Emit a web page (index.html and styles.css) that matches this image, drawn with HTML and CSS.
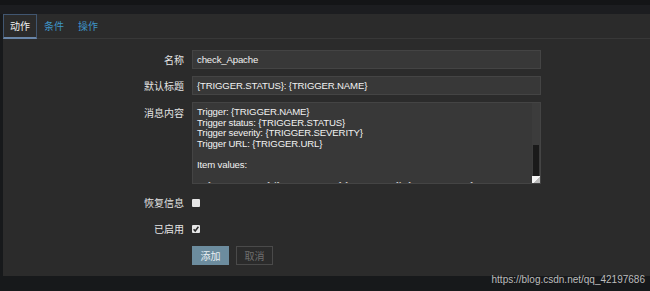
FILE: index.html
```html
<!DOCTYPE html>
<html lang="zh">
<head>
<meta charset="utf-8">
<title>动作</title>
<link rel="stylesheet" href="styles.css">
</head>
<body>
<div class="top"><div class="top-strip"></div></div>
<div class="panel">
  <div class="tabs">
    <div class="tab active">动作</div>
    <div class="tab">条件</div>
    <div class="tab">操作</div>
  </div>
  <div class="form">
    <div class="row r-input">
      <div class="label">名称</div>
      <div class="input">check_Apache</div>
    </div>
    <div class="row r-input">
      <div class="label">默认标题</div>
      <div class="input">{TRIGGER.STATUS}: {TRIGGER.NAME}</div>
    </div>
    <div class="row r-area">
      <div class="label">消息内容</div>
      <div class="textarea">
        <div class="area-text">Trigger: {TRIGGER.NAME}
Trigger status: {TRIGGER.STATUS}
Trigger severity: {TRIGGER.SEVERITY}
Trigger URL: {TRIGGER.URL}

Item values:

1. {ITEM.NAME1} ({HOST.NAME1}:{ITEM.KEY1}): {ITEM.VALUE1}</div>
        <div class="scroll"><div class="thumb"></div><div class="grip"></div></div>
      </div>
    </div>
    <div class="row r-check">
      <div class="label">恢复信息</div>
      <div><span class="cb"></span></div>
    </div>
    <div class="row r-check r-check2">
      <div class="label">已启用</div>
      <div><span class="cb"><svg width="8" height="8" viewBox="0 0 8 8"><path d="M1.6 4.2 L3.2 6 L6.4 1.8" fill="none" stroke="#2b2b2b" stroke-width="1.5"/></svg></span></div>
    </div>
    <div class="row r-btn">
      <div></div>
      <div class="buttons">
        <div class="btn primary">添加</div>
        <div class="btn secondary">取消</div>
      </div>
    </div>
  </div>
</div>
<div class="footer">https://blog.csdn.net/qq_42197686</div>
</body>
</html>
```
FILE: styles.css
```css
html, body {
  margin: 0;
  padding: 0;
}
body {
  width: 650px;
  height: 291px;
  overflow: hidden;
  background: #17191b;
  font-family: "Liberation Sans", Arial, "Noto Sans CJK SC", sans-serif;
  color: #e6e6e6;
}
.top {
  height: 14px;
  background: #1c1d20;
}
.top-strip {
  height: 5px;
  background: #141517;
}
.panel {
  margin-left: 3px;
  height: 262px;
  background: #2b2b2b;
  box-sizing: border-box;
}
.tabs {
  display: flex;
  height: 24px;
  border-bottom: 1px solid #383838;
}
.tab {
  padding: 0 7px;
  font-family: "Noto Sans CJK SC", sans-serif;
  font-size: 10px;
  line-height: 24px;
  color: #3f95c8;
}
.tab.active {
  color: #f0f0f0;
  box-sizing: border-box;
  border: 1px solid #415670;
  border-bottom: 2px solid #6a86a8;
  padding: 0 6px;
  line-height: 21px;
  height: 25px;
}
.form {
  display: flex;
  flex-direction: column;
  padding-top: 11px;
}
.row {
  display: grid;
  grid-template-columns: 181px 349px;
  column-gap: 8px;
  align-items: center;
}
.label {
  text-align: right;
  font-family: "Noto Sans CJK SC", sans-serif;
  font-size: 10px;
  color: #e4e4e4;
}
.r-input {
  height: 19px;
  margin-bottom: 7px;
}
.input {
  height: 19px;
  box-sizing: border-box;
  background: #383838;
  border: 1px solid #444;
  padding: 0 4px;
  font-size: 9.6px;
  letter-spacing: -0.15px;
  line-height: 17px;
  color: #f2f2f2;
  white-space: nowrap;
}
.r-area {
  align-items: start;
  height: 82px;
}
.r-area .label {
  padding-top: 3px;
}
.textarea {
  position: relative;
  height: 82px;
  box-sizing: border-box;
  background: #383838;
  border: 1px solid #444;
  overflow: hidden;
}
.area-text {
  white-space: pre;
  font-size: 9.6px;
  letter-spacing: -0.15px;
  line-height: 10.6px;
  padding: 4px 4px 0;
  color: #f2f2f2;
}
.scroll {
  position: absolute;
  right: 0;
  top: 0;
  bottom: 0;
  width: 8px;
  background: #3c3c3c;
}
.thumb {
  position: absolute;
  left: 1px;
  right: 1px;
  top: 42px;
  height: 33px;
  background: #1a1a1a;
}
.grip {
  position: absolute;
  left: 0;
  right: 0;
  bottom: 0;
  height: 7px;
  background: linear-gradient(135deg, #f4f4f4 60%, #bcbcbc 60%);
}
.r-check {
  height: 14px;
  margin-top: 11px;
}
.r-check2 {
  margin-top: 12px;
}
.cb {
  display: block;
  width: 8px;
  height: 8px;
  background: #e6e6e6;
  border-radius: 1px;
}
.cb svg {
  display: block;
}
.r-btn {
  margin-top: 11px;
}
.buttons {
  display: flex;
  gap: 7px;
}
.btn {
  width: 37px;
  height: 19px;
  box-sizing: border-box;
  text-align: center;
  font-family: "Noto Sans CJK SC", sans-serif;
  font-size: 10px;
  line-height: 17px;
}
.primary {
  background: #6c8c9e;
  border: 1px solid #6c8c9e;
  color: #e8eef2;
}
.secondary {
  border: 1px solid #4a4a4a;
  color: #6f6f6f;
}
.footer {
  height: 15px;
  text-align: right;
  padding-right: 5px;
  font-size: 10px;
  line-height: 7px;
  color: #bdbdbd;
}
```
